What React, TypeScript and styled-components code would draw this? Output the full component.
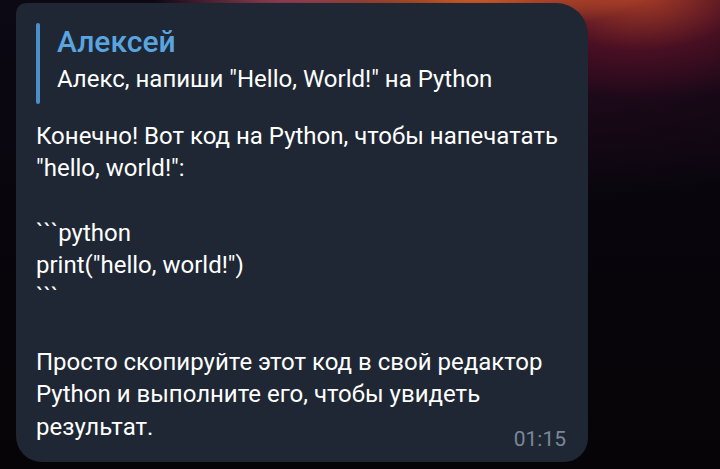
import React from "react"
import styled, { createGlobalStyle } from "styled-components"

const GlobalStyle = createGlobalStyle`
  html, body {
    margin: 0;
    padding: 0;
    width: 720px;
    height: 469px;
    overflow: hidden;
  }
  body {
    font-family: Roboto, "Noto Sans", sans-serif;
    background: #07050a;
  }
`

const Screen = styled.div`
  width: 720px;
  height: 469px;
  box-sizing: border-box;
  padding: 3px 0 0 16px;
  background:
    radial-gradient(ellipse 180px 40px at 470px -8px, rgba(245, 110, 40, 0.95), rgba(245, 110, 40, 0) 100%),
    radial-gradient(ellipse 140px 30px at 290px -6px, rgba(210, 90, 110, 0.8), rgba(210, 90, 110, 0) 100%),
    radial-gradient(ellipse 200px 110px at 640px -10px, rgba(190, 70, 40, 0.9), rgba(110, 20, 40, 0.5) 55%, rgba(40, 10, 30, 0) 100%),
    radial-gradient(ellipse 420px 200px at 560px 0px, rgba(60, 12, 40, 0.7), rgba(20, 8, 25, 0) 100%),
    linear-gradient(180deg, #0c0814 0%, #07050a 60%, #070407 100%);
`

const Bubble = styled.div`
  width: 572px;
  height: 459px;
  box-sizing: border-box;
  background: #1e2733;
  border-radius: 10px 32px 24px 26px;
  padding: 20px 22px 0 20px;
  display: flex;
  flex-direction: column;
`

const Reply = styled.div`
  display: flex;
  gap: 17px;
  margin-bottom: 16px;
`

const ReplyBar = styled.div`
  width: 4px;
  border-radius: 2px;
  background: #4b8fc9;
`

const ReplyBody = styled.div`
  display: flex;
  flex-direction: column;
  padding-bottom: 7px;
`

const ReplyName = styled.div`
  color: #5aa5e0;
  font-size: 30px;
  font-weight: 500;
  line-height: 38px;
`

const ReplyText = styled.div`
  color: #ffffff;
  font-size: 24px;
  line-height: 36px;
  white-space: nowrap;
`

const Text = styled.div`
  color: #ffffff;
  font-size: 24px;
  line-height: 32.3px;
  white-space: pre-wrap;
`

const Footer = styled.div`
  display: flex;
  justify-content: space-between;
  align-items: flex-end;
`

const Time = styled.span`
  color: #7b8896;
  font-size: 21px;
  line-height: 24px;
  margin-bottom: -8px;
`

const message = `Конечно! Вот код на Python, чтобы напечатать
"hello, world!":

\`\`\`python
print("hello, world!")
\`\`\`

Просто скопируйте этот код в свой редактор
Python и выполните его, чтобы увидеть`

export default function App() {
  return (
    <>
      <GlobalStyle />
      <Screen>
        <Bubble>
          <Reply>
            <ReplyBar />
            <ReplyBody>
              <ReplyName>Алексей</ReplyName>
              <ReplyText>Алекс, напиши "Hello, World!" на Python</ReplyText>
            </ReplyBody>
          </Reply>
          <Text>{message}</Text>
          <Footer>
            <Text>результат.</Text>
            <Time>01:15</Time>
          </Footer>
        </Bubble>
      </Screen>
    </>
  )
}
